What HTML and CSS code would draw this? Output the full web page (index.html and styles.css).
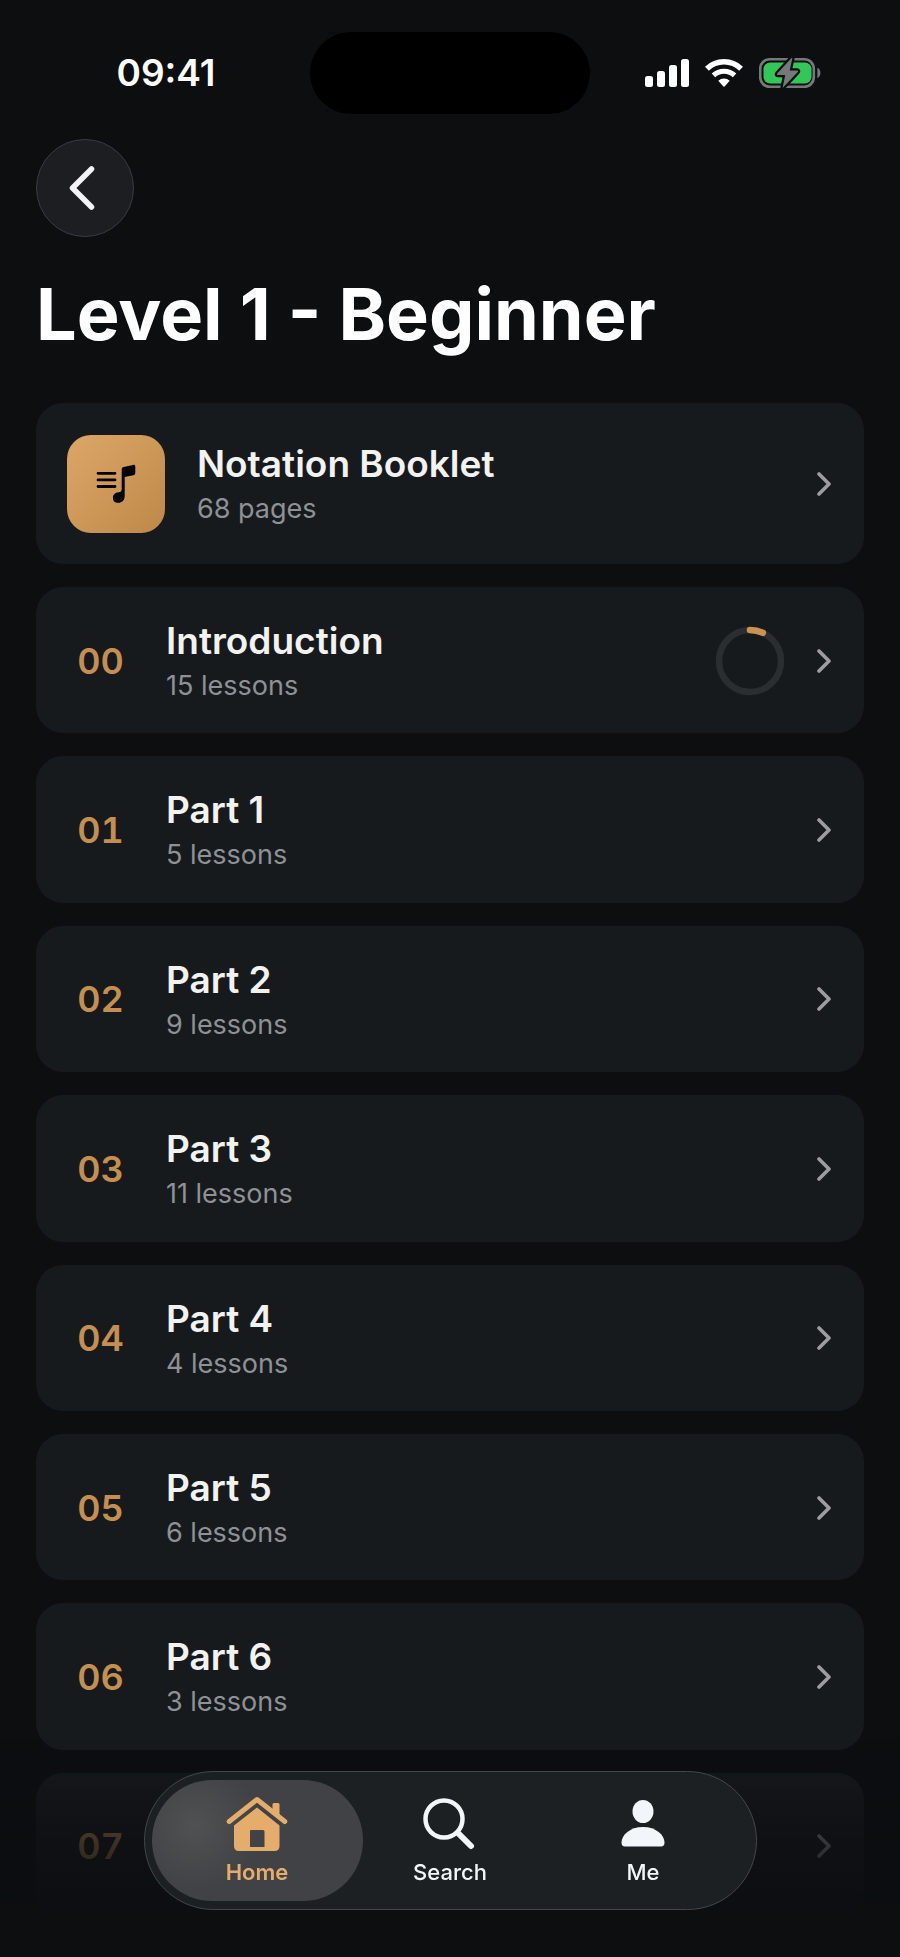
FILE: index.html
```html
<!DOCTYPE html>
<html lang="en">
<head>
<meta charset="utf-8">
<meta name="viewport" content="width=device-width, initial-scale=1">
<title>Level 1 - Beginner</title>
<link rel="stylesheet" href="styles.css">
</head>
<body>
<svg class="defs" aria-hidden="true">
  <symbol id="chevron" viewBox="0 0 14 24"><path d="M2 2l10 10L2 22" fill="none" stroke="currentColor" stroke-width="3.600" stroke-linecap="round" stroke-linejoin="round"/></symbol>
</svg>

<header class="status-bar">
  <time class="clock">09:41</time>
  <div class="island"></div>
  <div class="indicators">
    <svg width="44" height="28" viewBox="0 0 44 28" fill="#fff" role="img" aria-label="Signal">
      <rect x="0" y="17" width="8" height="11" rx="2.5"/><rect x="12" y="12" width="8" height="16" rx="2.5"/><rect x="24" y="6" width="8" height="22" rx="2.5"/><rect x="36" y="0" width="8" height="28" rx="2.5"/>
    </svg>
    <svg width="38" height="28" viewBox="0 0 38 28" role="img" aria-label="Wi-Fi">
      <path d="M1.9 9.8a24.4 24.4 0 0 1 34.2 0" fill="none" stroke="#fff" stroke-width="5.6"/>
      <path d="M8.4 16.4a15.3 15.3 0 0 1 21.2 0" fill="none" stroke="#fff" stroke-width="5"/>
      <path d="M13.3 21.7a8.4 8.4 0 0 1 11.4 0L19.6 27.4a.9.9 0 0 1-1.2 0z" fill="#fff"/>
    </svg>
    <svg width="62" height="32" viewBox="0 0 62 32" role="img" aria-label="Battery charging">
      <rect x="1.2" y="2.2" width="53.6" height="27.6" rx="9.5" fill="none" stroke="#77787b" stroke-width="2.6"/>
      <rect x="4.5" y="5.5" width="48" height="21" rx="6.5" fill="#32c759"/>
      <path d="M58.4 10.8c4 1.600 4 8.800 0 10.400z" fill="#77787b"/>
      <path d="M32.500 1L18.200 16.600c-.5.6-.2 1.400.6 1.400h7.400L23.600 31 38.800 14.900c.5-.6.2-1.500-.6-1.500h-7.500L33.400 1z" fill="#77787b" stroke="#0c0e10" stroke-width="4.500" stroke-linejoin="round" paint-order="stroke"/>
    </svg>
  </div>
</header>

<main class="page">
  <button class="back" type="button" aria-label="Back">
    <svg width="26" height="44" viewBox="0 0 26 44"><path d="M22.500 3L3.500 22l19 19" fill="none" stroke="#f2f2f7" stroke-width="5.500" stroke-linecap="round" stroke-linejoin="round"/></svg>
  </button>
  <h1 class="heading">Level 1 - Beginner</h1>

  <nav class="list" aria-label="Lessons">
    <a class="card" href="#booklet">
      <span class="badge">
        <svg width="40" height="40" viewBox="0 0 40 40">
          <path d="M2 9.300h17M2 15.900h17M2 22.500h17" stroke="#000" stroke-width="2.800" stroke-linecap="round"/>
          <path d="M25.700 5.400c0-1.500.7-2.200 2-2.500l9.400-2c1.400-.3 2.200.4 2.200 1.700v6.200c0 1.400-.7 2.200-2 2.500l-8.600 1.800v18.700c0 4.500-2.600 7-6.500 7-3.300 0-5.300-2-5.300-4.800 0-3.200 2.300-5.500 5.600-5.800 2.300-.2 3.200-.9 3.200-3z"/>
        </svg>
      </span>
      <span class="label"><span class="title">Notation Booklet</span><span class="meta">68 pages</span></span>
      <svg class="chevron"><use href="#chevron"/></svg>
    </a>
    <a class="card" href="#part-0">
      <span class="number">00</span>
      <span class="label"><span class="title">Introduction</span><span class="meta">15 lessons</span></span>
      <svg class="ring" viewBox="0 0 70 70" role="img" aria-label="Progress">
        <circle cx="35" cy="35" r="31" fill="none" stroke="#2b2e31" stroke-width="6.500"/>
        <path d="M35 4a31 31 0 0 1 12.800 2.800" fill="none" stroke="#cb9352" stroke-width="6.500" stroke-linecap="round"/>
      </svg>
      <svg class="chevron"><use href="#chevron"/></svg>
    </a>
    <a class="card" href="#part-1">
      <span class="number">01</span>
      <span class="label"><span class="title">Part 1</span><span class="meta">5 lessons</span></span>
      <svg class="chevron"><use href="#chevron"/></svg>
    </a>
    <a class="card" href="#part-2">
      <span class="number">02</span>
      <span class="label"><span class="title">Part 2</span><span class="meta">9 lessons</span></span>
      <svg class="chevron"><use href="#chevron"/></svg>
    </a>
    <a class="card" href="#part-3">
      <span class="number">03</span>
      <span class="label"><span class="title">Part 3</span><span class="meta">11 lessons</span></span>
      <svg class="chevron"><use href="#chevron"/></svg>
    </a>
    <a class="card" href="#part-4">
      <span class="number">04</span>
      <span class="label"><span class="title">Part 4</span><span class="meta">4 lessons</span></span>
      <svg class="chevron"><use href="#chevron"/></svg>
    </a>
    <a class="card" href="#part-5">
      <span class="number">05</span>
      <span class="label"><span class="title">Part 5</span><span class="meta">6 lessons</span></span>
      <svg class="chevron"><use href="#chevron"/></svg>
    </a>
    <a class="card" href="#part-6">
      <span class="number">06</span>
      <span class="label"><span class="title">Part 6</span><span class="meta">3 lessons</span></span>
      <svg class="chevron"><use href="#chevron"/></svg>
    </a>
    <a class="card card-last" href="#part-7" aria-label="Part 7">
      <span class="number">07</span>
      <span class="label"></span>
      <svg class="chevron"><use href="#chevron"/></svg>
    </a>
  </nav>
</main>

<div class="dock">
  <nav class="tabs" aria-label="Main">
    <a class="tab tab-active" href="#home" aria-current="page">
      <svg class="tab-icon" viewBox="0 0 62 56" fill="currentColor">
        <path d="M3.200 25.500L31 3.500l27.800 22" fill="none" stroke="currentColor" stroke-width="5" stroke-linecap="round" stroke-linejoin="round"/>
        <path d="M46.500 17V8.500q0-1.500 1.500-1.500h4q1.500 0 1.500 1.500V22z"/>
        <path fill-rule="evenodd" d="M31 11.500L8 29.500V50q0 5 5 5h35.500q5 0 5-5V29.500zM25 34h12q1.500 0 1.500 1.500V51H24V35q0-1 1-1z"/>
      </svg>
      <span>Home</span>
    </a>
    <a class="tab" href="#search">
      <svg class="tab-icon" viewBox="0 0 62 56" fill="none" stroke="currentColor" stroke-linecap="round">
        <circle cx="25" cy="23" r="18.500" stroke-width="4.500"/><path d="M39 37l13 13" stroke-width="6"/>
      </svg>
      <span>Search</span>
    </a>
    <a class="tab" href="#me">
      <svg class="tab-icon" viewBox="0 0 62 56" fill="currentColor">
        <ellipse cx="31" cy="15.500" rx="10.500" ry="11.500"/>
        <path d="M13 50.500q-3.500 0-3.500-4C9.500 39 18 31 31 31s21.500 8 21.500 15.500q0 4-3.500 4z"/>
      </svg>
      <span>Me</span>
    </a>
  </nav>
</div>
</body>
</html>
```
FILE: styles.css
```css
* { box-sizing: border-box; }

body {
  margin: 0;
  background: #0c0e10;
  color: #f2f2f0;
  font-family: Inter, "Liberation Sans", sans-serif;
}

a { color: inherit; text-decoration: none; }
svg { display: block; flex: none; }
.defs { display: none; }

.status-bar {
  display: grid;
  grid-template-columns: 1fr 280px 1fr;
  align-items: center;
  padding-top: 32px;
}
.clock {
  padding-left: 22px;
  text-align: center;
  color: #fff;
  font-size: 37px;
  font-weight: 600;
  line-height: 44px;
}
.island { height: 82px; border-radius: 41px; background: #000; }
.indicators { display: flex; align-items: center; gap: 16px; padding-left: 55px; }

.page { padding: 25px 36px 36px; }

.back {
  display: flex;
  align-items: center;
  width: 98px;
  height: 98px;
  padding: 0 0 0 32px;
  border: 1px solid #3a3c3f;
  border-radius: 50%;
  background: #1c1e21;
}

.heading {
  margin: 33px 0 45px;
  color: #fff;
  font-size: 72px;
  font-weight: 700;
  line-height: 88px;
}

.list { display: flex; flex-direction: column; gap: 23px; }
.card {
  display: flex;
  align-items: center;
  gap: 32px;
  padding: 32px 33px 31px 31px;
  border-radius: 27px;
  background: #171a1d;
}
.badge {
  display: flex;
  align-items: center;
  justify-content: center;
  width: 98px;
  height: 98px;
  border-radius: 24px;
  background: linear-gradient(135deg, #dba768, #bf8848);
}
.number {
  width: 67px;
  text-align: center;
  color: #c58f50;
  font-size: 36px;
  font-weight: 600;
  font-variant-numeric: tabular-nums;
}
.label { display: flex; flex: 1; flex-direction: column; gap: 7px; }
.title { font-size: 37px; font-weight: 600; line-height: 44px; }
.meta { color: #8e9195; font-size: 27px; line-height: 1.2; }
.chevron { width: 14px; height: 24px; color: #9b9da0; }
.ring { width: 70px; height: 70px; }
.card-last { min-height: 146px; }

/* Floating tab bar over a fade at the end of the list */
.dock {
  position: fixed;
  right: 0;
  bottom: 0;
  left: 0;
  display: flex;
  justify-content: center;
  padding: 31px 0 47px;
  background: linear-gradient(#0c0e1000, #0c0e10aa 40%, #0c0e10 80%);
}
.tabs {
  display: flex;
  padding: 8px 16px;
  border: 1px solid #43474a;
  border-radius: 70px;
  background: #1d2023;
}
.tab {
  display: flex;
  flex-direction: column;
  align-items: center;
  gap: 7px;
  width: 193px;
  padding: 16px 0;
  border-radius: 61px;
  color: #f2f5fa;
  font-size: 22px;
  font-weight: 500;
  line-height: 26px;
}
.tab-active {
  width: 211px;
  margin: 0 -9px;
  background: radial-gradient(circle at 20% 38%, #505152, #404245 35%);
  color: #e5ad6c;
  font-weight: 600;
}
.tab-icon { width: 62px; height: 56px; }
```
